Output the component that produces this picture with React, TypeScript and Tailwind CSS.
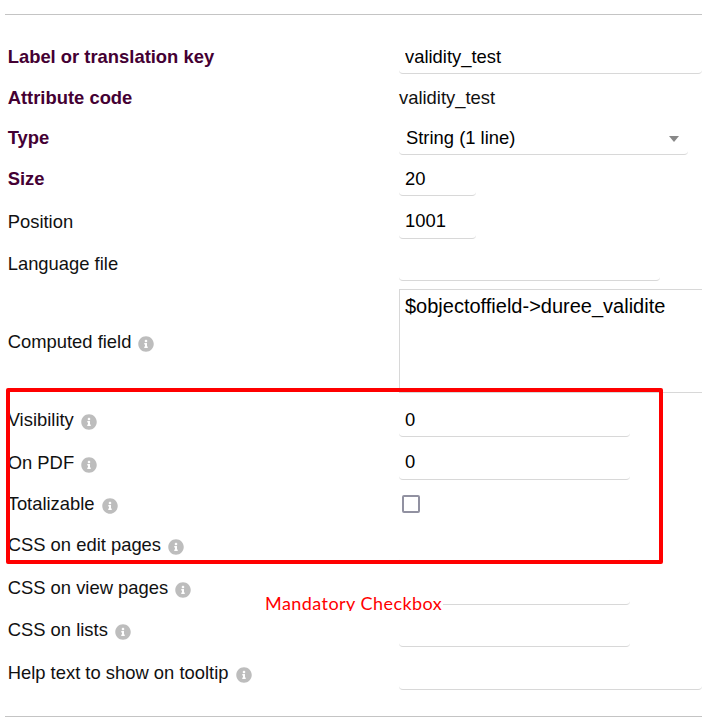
import { FaInfoCircle } from "react-icons/fa";

const inputCls =
	"h-full bg-white pl-[6px] border-b border-[#d8d8d8] rounded-b-[4px] outline-none text-black";

const Info = () => <FaInfoCircle size={16} className="ml-[7px] mt-[3px] text-[#bdbdbd] shrink-0" />;

const Label = ({
	text,
	bold,
	info,
	className = "",
}: {
	text: string;
	bold?: boolean;
	info?: boolean;
	className?: string;
}) => (
	<div className={`w-[391.3px] shrink-0 flex items-center ${className}`}>
		<span className={bold ? "font-bold text-[#440033]" : "text-[#111]"}>{text}</span>
		{info && <Info />}
	</div>
);

const Input = ({ value = "", width, className = "" }: { value?: string; width: string; className?: string }) => (
	<input readOnly value={value} className={`${inputCls} ${width} ${className}`} />
);

export default function App() {
	return (
		<div className="relative w-[702px] h-[717px] overflow-hidden bg-white pt-[14px] pl-[5px] text-[18.4px] leading-[22px] font-['Liberation_Sans',Arial,sans-serif]">
			<div className="border-t border-[#c4c4c4]" />

			<div className="pl-[2.7px] mt-[25px]">
				<div className="flex h-[34px]">
					<Label text="Label or translation key" bold />
					<Input value="validity_test" width="w-[304px]" />
				</div>
				<div className="flex h-[34px] mt-[7px] items-center">
					<Label text="Attribute code" bold />
					<span className="text-[#111]">validity_test</span>
				</div>
				<div className="flex h-[34px] mt-[6px]">
					<Label text="Type" bold />
					<div className="relative w-[289px] h-full flex items-center pl-[7px] border-b border-[#d8d8d8] rounded-b-[4px] text-black">
						String (1 line)
						<span className="absolute right-[9px] top-[15px] border-x-[5px] border-x-transparent border-t-[6px] border-t-[#888]" />
					</div>
				</div>
				<div className="flex h-[34px] mt-[7px]">
					<Label text="Size" bold />
					<Input value="20" width="w-[77px]" />
				</div>
				<div className="flex h-[34px] mt-[9px]">
					<Label text="Position" />
					<Input value="1001" width="w-[77px]" className="pb-[2px]" />
				</div>
				<div className="flex h-[34px] mt-[8px]">
					<Label text="Language file" />
					<Input width="w-[261px]" />
				</div>
				<div className="flex h-[104px] mt-[8px]">
					<Label text="Computed field" info className="pt-[2px]" />
					<textarea
						readOnly
						value="$objectoffield->duree_validite"
						className="w-[312px] h-full shrink-0 resize-none bg-white pl-[5px] pt-[5px] border border-r-0 border-[#d8d8d8] outline-none text-black text-[20px]"
					/>
				</div>
				<div className="flex h-[34px] mt-[10px]">
					<Label text="Visibility" info />
					<Input value="0" width="w-[231px]" />
				</div>
				<div className="flex h-[34px] mt-[9px]">
					<Label text="On PDF" info />
					<Input value="0" width="w-[231px]" className="pb-[2px]" />
				</div>
				<div className="flex h-[34px] mt-[8px] items-center">
					<Label text="Totalizable" info className="-mt-[2px]" />
					<span className="ml-[3px] -mt-[2px] w-[18px] h-[18px] border-2 border-[#9191a1] rounded-[2px]" />
				</div>
				<div className="flex h-[34px] mt-[7px]">
					<Label text="CSS on edit pages" info className="-mt-[2px]" />
					<Input width="w-[231px]" />
				</div>
				<div className="flex h-[34px] mt-[8px]">
					<Label text="CSS on view pages" info />
					<Input width="w-[231px]" />
				</div>
				<div className="flex h-[34px] mt-[8px]">
					<Label text="CSS on lists" info />
					<Input width="w-[231px]" />
				</div>
				<div className="flex h-[34px] mt-[9px]">
					<Label text="Help text to show on tooltip" info />
					<Input width="w-[304px]" />
				</div>
			</div>

			<div className="border-t border-[#c4c4c4] mt-[26px]" />

			{/* annotation pasted over the form */}
			<div className="absolute left-[265px] top-[592px] h-[19px] overflow-hidden pr-px bg-white text-[#ff0000] text-[18px] leading-[22px] tracking-[0.45px] font-['Lato',sans-serif]">
				Mandatory Checkbox
			</div>
			<div className="absolute left-[6px] top-[388px] w-[657px] h-[176px] border-4 border-[#ff0000] rounded-[2px]" />
		</div>
	);
}
